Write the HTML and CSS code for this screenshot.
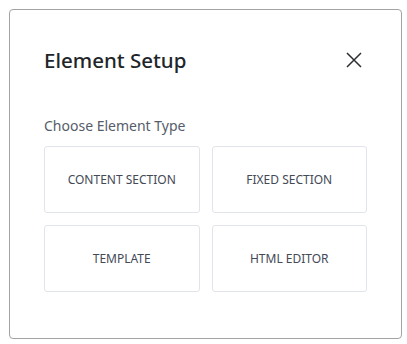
FILE: index.html
```html
<!DOCTYPE html>
<html>
<head>
<meta charset="utf-8">
<link rel="stylesheet" href="styles.css">
</head>
<body>
<div class="modal">
  <div class="modal-header">
    <h2 class="modal-title">Element Setup</h2>
    <button class="close" aria-label="Close">
      <svg width="16" height="16" viewBox="0 0 16 16"><path d="M1 1 L15 15 M15 1 L1 15" stroke="#2b2f33" stroke-width="1.5" fill="none"/></svg>
    </button>
  </div>
  <div class="label">Choose Element Type</div>
  <div class="grid">
    <div class="card">CONTENT SECTION</div>
    <div class="card">FIXED SECTION</div>
    <div class="card">TEMPLATE</div>
    <div class="card">HTML EDITOR</div>
  </div>
</div>
</body>
</html>
```
FILE: styles.css
```css
html, body { margin: 0; padding: 0; background: #fff; }
body { font-family: "Noto Sans", "Open Sans", sans-serif; }
.modal {
  margin: 9px;
  width: 393px;
  height: 330px;
  box-sizing: border-box;
  border: 1px solid #a3a3a3;
  border-radius: 4px;
  padding: 0 34px;
}
.modal-header {
  display: flex;
  align-items: center;
  justify-content: space-between;
  padding-top: 36px;
}
.modal-title {
  margin: 0;
  font-size: 20.5px;
  font-weight: 500;
  line-height: 28px;
  color: #212529;
}
.close {
  border: 0;
  background: none;
  padding: 0;
  margin-right: 5px;
  width: 16px;
  height: 16px;
  display: flex;
}
.label {
  margin-top: 42px;
  font-size: 14px;
  line-height: 20px;
  color: #555c6a;
}
.grid {
  margin-top: 10px;
  display: grid;
  grid-template-columns: 1fr 1fr;
  grid-auto-rows: 67px;
  gap: 12px;
}
.card {
  border: 1px solid #e1e4ea;
  border-radius: 3px;
  display: flex;
  align-items: center;
  justify-content: center;
  font-size: 12px;
  color: #434955;
}
```
